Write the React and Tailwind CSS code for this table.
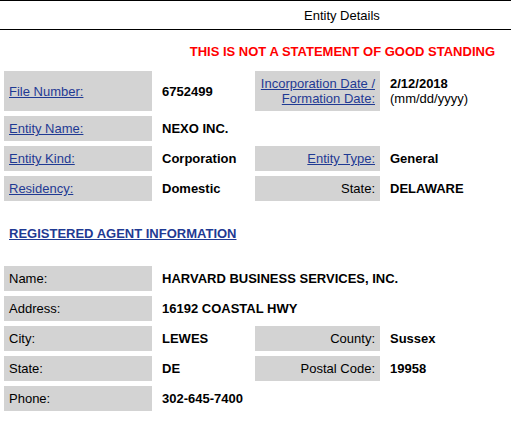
const LINK = "text-[#1f3a93] underline";

const Label = ({ children, link, right, className = "" }) => (
  <div
    className={`bg-[#d3d3d3] flex items-center px-[5px] ${
      right ? "justify-end text-right" : ""
    } ${className}`}
  >
    {link ? <a href="#" className={LINK}>{children}</a> : <span>{children}</span>}
  </div>
);

const Value = ({ children, className = "" }) => (
  <div className={`flex items-center px-[5px] font-bold ${className}`}>{children}</div>
);

export default function App() {
  return (
    <div className="min-h-screen bg-white text-[13px] leading-[15px] text-black font-['Liberation_Sans',Arial,sans-serif]">
      {/* title bar */}
      <div className="h-[30px] border-t border-b border-black flex items-center pl-[304px]">
        Entity Details
      </div>

      <div className="mt-[14px] pr-[16px] text-right font-bold text-[#ff0000]">
        THIS IS NOT A STATEMENT OF GOOD STANDING
      </div>

      {/* entity table */}
      <div className="mt-[12px] ml-[4px] grid grid-cols-[148px_93px_125px_1fr] grid-rows-[40px_25px_25px_25px] gap-[5px]">
        <Label link>File Number:</Label>
        <Value>6752499</Value>
        <Label link right>
          Incorporation Date /<br />Formation Date:
        </Label>
        <div className="flex flex-col justify-center px-[5px]">
          <span className="font-bold">2/12/2018</span>
          <span>(mm/dd/yyyy)</span>
        </div>

        <Label link>Entity Name:</Label>
        <Value className="col-span-3">NEXO INC.</Value>

        <Label link>Entity Kind:</Label>
        <Value>Corporation</Value>
        <Label link right>Entity Type:</Label>
        <Value>General</Value>

        <Label link>Residency:</Label>
        <Value>Domestic</Value>
        <Label right>State:</Label>
        <Value>DELAWARE</Value>
      </div>

      <div className="mt-[25px] pl-[9px]">
        <a href="#" className="font-bold text-[#1f3a93] underline">
          REGISTERED AGENT INFORMATION
        </a>
      </div>

      {/* agent table */}
      <div className="mt-[25px] ml-[4px] grid grid-cols-[148px_93px_125px_1fr] auto-rows-[25px] gap-[5px]">
        <Label>Name:</Label>
        <Value className="col-span-3">HARVARD BUSINESS SERVICES, INC.</Value>

        <Label>Address:</Label>
        <Value className="col-span-3">16192 COASTAL HWY</Value>

        <Label>City:</Label>
        <Value>LEWES</Value>
        <Label right>County:</Label>
        <Value>Sussex</Value>

        <Label>State:</Label>
        <Value>DE</Value>
        <Label right>Postal Code:</Label>
        <Value>19958</Value>

        <Label>Phone:</Label>
        <Value className="col-span-3">302-645-7400</Value>
      </div>
    </div>
  );
}
